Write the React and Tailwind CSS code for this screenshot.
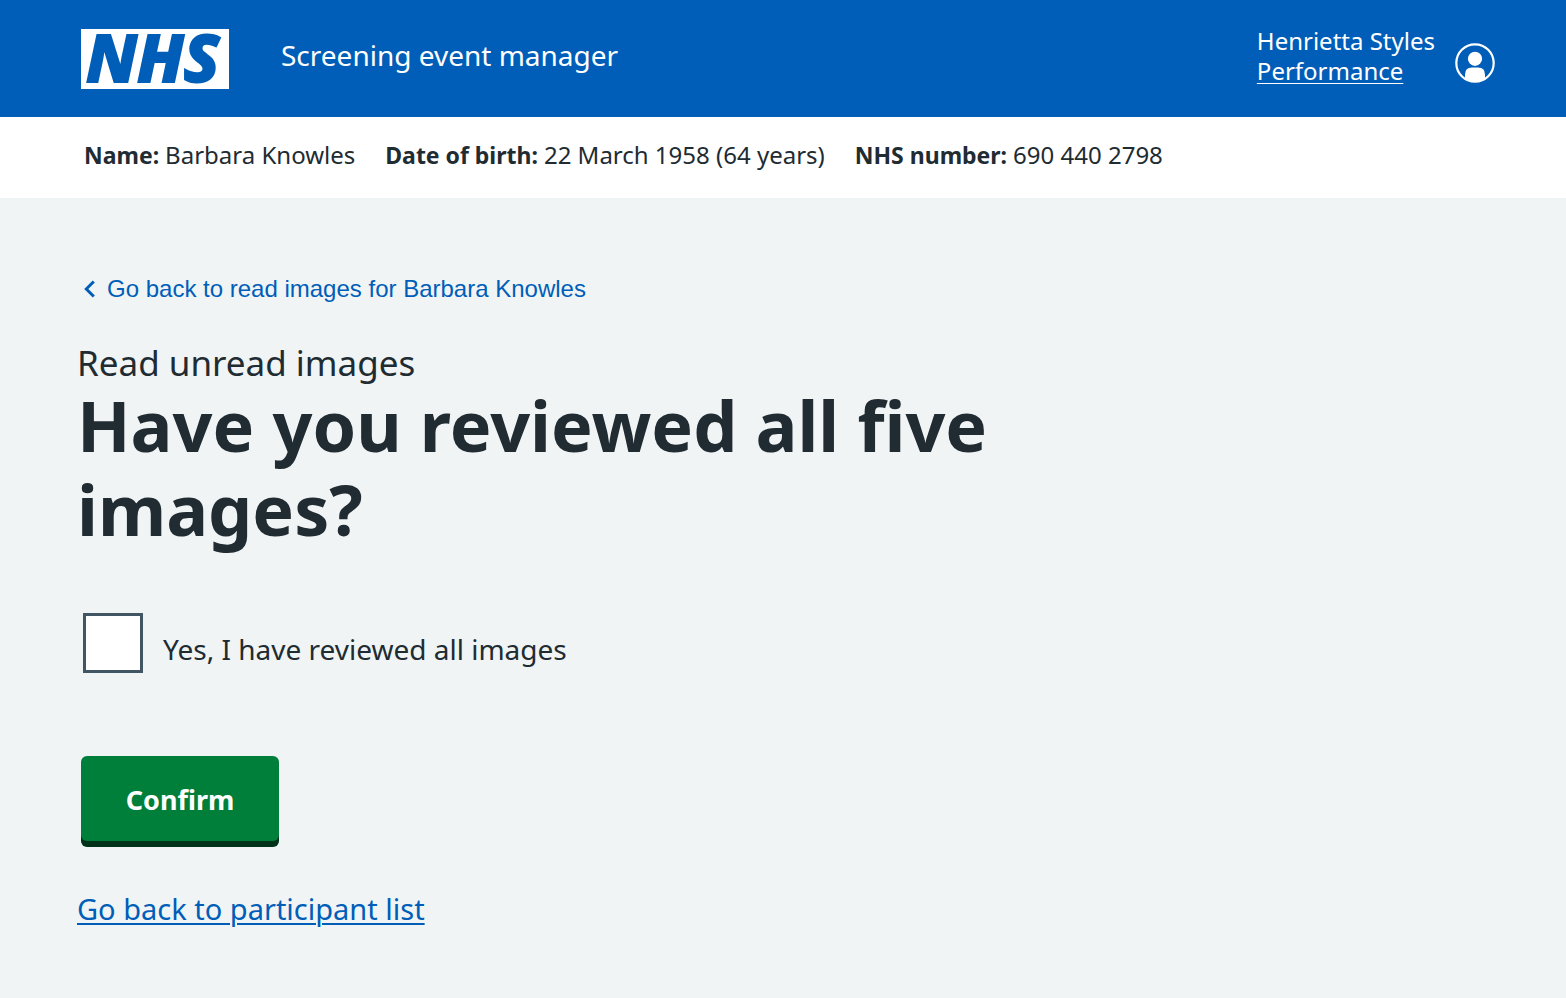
import React from "react";

function NhsLogo() {
  return (
    <a
      href="#home"
      aria-label="NHS"
      className="flex h-[60px] w-[148px] shrink-0 items-center justify-center bg-white"
    >
      <svg viewBox="0 0 148 60" className="h-full w-full overflow-visible" role="img" aria-label="NHS">
        <text
          x="5"
          y="53"
          fill="#005eb8"
          stroke="#005eb8"
          strokeWidth="2"
          fontSize="66"
          fontWeight="800"
          fontStyle="italic"
          fontFamily="'Noto Sans', sans-serif"
        >
          NHS
        </text>
      </svg>
    </a>
  );
}

function UserIcon() {
  return (
    <svg viewBox="0 0 40 40" className="h-10 w-10" aria-hidden="true">
      <circle cx="20" cy="20" r="18.7" fill="none" stroke="#fff" strokeWidth="2.2" />
      <circle cx="20" cy="15.8" r="7.1" fill="#fff" />
      <path d="M10 36V31.5Q10 24.5 17 24.5H23Q30 24.5 30 31.5V36A19 19 0 0 1 10 36Z" fill="#fff" />
    </svg>
  );
}

function Header() {
  return (
    <header className="flex min-h-[117px] items-center justify-between gap-8 bg-[#005eb8] pr-[71px] pl-[81px] text-white">
      <div className="flex items-center gap-[52px]">
        <NhsLogo />
        <span className="pb-2 text-[28px] leading-9">Screening event manager</span>
      </div>
      <div className="flex items-center gap-5">
        <div className="flex flex-col items-start pb-[6px] text-[24px] leading-[30px]">
          <span>Henrietta Styles</span>
          <a href="#performance" className="underline decoration-1 underline-offset-[3px]">
            Performance
          </a>
        </div>
        <button type="button" aria-label="Account" className="pt-2">
          <UserIcon />
        </button>
      </div>
    </header>
  );
}

const details = [
  { term: "Name:", value: "Barbara Knowles" },
  { term: "Date of birth:", value: "22 March 1958 (64 years)" },
  { term: "NHS number:", value: "690 440 2798" },
];

function ParticipantBar() {
  return (
    <dl className="flex flex-wrap gap-x-[30px] bg-white px-[84px] pt-5 pb-[25px] text-[24px] leading-9">
      {details.map(({ term, value }) => (
        <div key={term} className="flex items-baseline gap-[6px]">
          <dt className="text-[23px] font-bold">{term}</dt>
          <dd>{value}</dd>
        </div>
      ))}
    </dl>
  );
}

export default function App() {
  return (
    <div className="flex min-h-screen flex-col bg-[#f0f4f5] font-['Noto_Sans',sans-serif] text-[#212b32]">
      <Header />
      <ParticipantBar />
      <main className="flex flex-col items-start px-[77px] pt-[73px] pb-14">
        <a
          href="#images"
          className="ml-[6px] flex items-center gap-2 font-['Liberation_Sans',sans-serif] text-[24px] leading-9 text-[#005eb8]"
        >
          <svg viewBox="0 0 16 20" className="h-5 w-4" aria-hidden="true">
            <path d="M10.8 2.5L3.3 10L10.8 17.5" fill="none" stroke="#005eb8" strokeWidth="3" />
          </svg>
          Go back to read images for Barbara Knowles
        </a>
        <h1 className="mt-8 max-w-[960px]">
          <span className="block text-[35px] leading-[48px]">Read unread images</span>
          <span className="-mt-1 block text-[70px] leading-[84px] font-bold">
            Have you reviewed all five images?
          </span>
        </h1>
        <form
          className="mt-[62px] ml-1 flex flex-col items-start"
          onSubmit={(event) => event.preventDefault()}
        >
          <div className="flex items-center gap-5 pl-[2px]">
            <input
              id="reviewed"
              type="checkbox"
              className="h-[60px] w-[60px] appearance-none border-3 border-[#425563] bg-white checked:bg-[#425563]"
            />
            <label htmlFor="reviewed" className="pt-3 text-[28px] leading-9">
              Yes, I have reviewed all images
            </label>
          </div>
          <button
            type="submit"
            className="mt-[83px] h-[85px] w-[198px] rounded-md bg-[#007f3b] pt-1 text-[27px] font-bold text-white shadow-[0_6px_0_#00321a]"
          >
            Confirm
          </button>
        </form>
        <a
          href="#participants"
          className="mt-12 text-[29px] leading-10 text-[#005eb8] underline decoration-2 underline-offset-[3px]"
        >
          Go back to participant list
        </a>
      </main>
    </div>
  );
}
